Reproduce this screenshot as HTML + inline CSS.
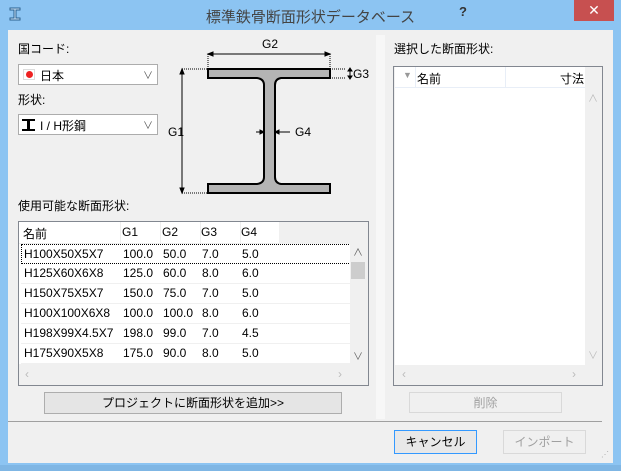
<!DOCTYPE html>
<html><head><meta charset="utf-8"><style>
*{box-sizing:border-box;margin:0;padding:0}
body{width:621px;height:471px;background:#8cc4f2;font-family:"Liberation Sans","Noto Sans CJK JP",sans-serif;font-size:12px;color:#000;position:relative;overflow:hidden}
.a{position:absolute}
.client{left:8px;top:30px;width:605px;height:433px;background:#f0f0f0}
.combo{background:#fff;border:1px solid #acacac;height:21px}
.lb{border:1px solid #828790;background:#fff}
.btn{border:1px solid #adadad;background:#e5e5e5;text-align:center;line-height:20px}
.dis{border:1px solid #d9d9d9;background:#f0f0f0;color:#a0a0a0;text-align:center;line-height:20px}
.row{position:absolute;left:0;width:330px;height:20px;border-bottom:1px solid #f0f0f0;line-height:19px}
.row span{position:absolute}
</style></head><body>
<div class="a" style="left:0;top:0;width:621px;height:30px;background:#8cc4f2"></div>
<svg class="a" style="left:9px;top:7px" width="12" height="14"><path d="M1 1H11V3H7V11H11V13H1V11H5V3H1Z" fill="#cfe6f7" stroke="#2a5f8f" stroke-width="1"/></svg>
<div class="a" style="left:0;top:6px;width:621px;text-align:center;font-size:15px;color:#444">標準鉄骨断面形状データベース</div>
<div class="a" style="left:459px;top:4px;font-size:13px;font-weight:bold;color:#333">?</div>
<div class="a" style="left:574px;top:0;width:40px;height:21px;background:#c75050;color:#fff;text-align:center;font-size:14px;line-height:20px">✕</div>
<div class="a client"></div>
<div class="a" style="left:376px;top:35px;width:9px;height:384px;background:#f7f7f7"></div>

<div class="a" style="left:18px;top:40px">国コード:</div>
<div class="a combo" style="left:18px;top:64px;width:140px"><span class="a" style="left:4px;top:4px;width:12px;height:11px;background:#fff;border:1px solid #ddd"></span><span class="a" style="left:7px;top:6px;width:7px;height:7px;border-radius:50%;background:#e22"></span><span class="a" style="left:21px;top:2px">日本</span><span class="a" style="right:4px;top:2px;color:#555;font-size:10px">∨</span></div>
<div class="a" style="left:18px;top:91px">形状:</div>
<div class="a combo" style="left:18px;top:114px;width:140px"><span class="a" style="left:8px;top:5px;width:3px;height:10px;background:#000"></span><span class="a" style="left:3px;top:4px;width:13px;height:2px;background:#000"></span><span class="a" style="left:3px;top:14px;width:13px;height:2px;background:#000"></span><span class="a" style="left:21px;top:2px">I / H形鋼</span><span class="a" style="right:4px;top:2px;color:#555;font-size:10px">∨</span></div>

<svg class="a" style="left:160px;top:30px" width="220" height="170">
<g stroke="#000" stroke-width="1" fill="none">
<path d="M48 24H170M48 24l5-2v4zM170 24l-5-2v4z" fill="#000"/>
<path d="M48 24V39M170 24V39M22 39H48M170 39H185M170 48H185M22 163H48" stroke-dasharray="1,1"/>
<path d="M22 39V163M22 39l-2 5h4zM22 163l-2-5h4z" fill="#000"/>
<path d="M190 38V49M190 38l-2 3h4zM190 49l-2-3h4z" fill="#000"/>
<path d="M96 102h8M104 102l-4-2v4zM115 102h15M115 102l4-2v4z" fill="#000"/>
</g>
<path d="M48 39H170V48H121Q115 49 115 55V147Q115 153 121 154H170V163H48V154H97Q104 153 104 147V55Q104 49 97 48H48Z" fill="#b4b4b4" stroke="#000" stroke-width="2"/>
<text x="102" y="18" font-size="12" font-family="Liberation Sans">G2</text>
<text x="193" y="48" font-size="12" font-family="Liberation Sans">G3</text>
<text x="8" y="106" font-size="12" font-family="Liberation Sans">G1</text>
<text x="135" y="106" font-size="12" font-family="Liberation Sans">G4</text>
</svg>

<div class="a" style="left:18px;top:197px">使用可能な断面形状:</div>
<div class="a lb" style="left:18px;top:221px;width:351px;height:165px;overflow:hidden">
<div class="a" style="left:0;top:0;width:260px;height:22px;background:#fff;border-bottom:1px solid #eee"></div>
<div class="a" style="left:260px;top:0;width:90px;height:22px;background:#f0f0f0"></div>
<span class="a" style="left:4px;top:3px">名前</span><span class="a" style="left:103px;top:3px">G1</span><span class="a" style="left:143px;top:3px">G2</span><span class="a" style="left:182px;top:3px">G3</span><span class="a" style="left:222px;top:3px">G4</span>
<div class="a" style="left:101px;top:0;width:1px;height:22px;background:#eee"></div>
<div class="a" style="left:141px;top:0;width:1px;height:22px;background:#eee"></div>
<div class="a" style="left:181px;top:0;width:1px;height:22px;background:#eee"></div>
<div class="a" style="left:221px;top:0;width:1px;height:22px;background:#eee"></div>
<div style="position:absolute;left:2px;top:22px;width:330px;height:120px">
<div class="row" style="top:0;border:1px dotted #000"><span style="left:2px">H100X50X5X7</span><span style="left:101px">100.0</span><span style="left:141px">50.0</span><span style="left:180px">7.0</span><span style="left:220px">5.0</span></div>
<div class="row" style="top:20px"><span style="left:3px">H125X60X6X8</span><span style="left:102px">125.0</span><span style="left:142px">60.0</span><span style="left:181px">8.0</span><span style="left:221px">6.0</span></div>
<div class="row" style="top:40px"><span style="left:3px">H150X75X5X7</span><span style="left:102px">150.0</span><span style="left:142px">75.0</span><span style="left:181px">7.0</span><span style="left:221px">5.0</span></div>
<div class="row" style="top:60px"><span style="left:3px">H100X100X6X8</span><span style="left:102px">100.0</span><span style="left:142px">100.0</span><span style="left:181px">8.0</span><span style="left:221px">6.0</span></div>
<div class="row" style="top:80px"><span style="left:3px">H198X99X4.5X7</span><span style="left:102px">198.0</span><span style="left:142px">99.0</span><span style="left:181px">7.0</span><span style="left:221px">4.5</span></div>
<div class="row" style="top:100px"><span style="left:3px">H175X90X5X8</span><span style="left:102px">175.0</span><span style="left:142px">90.0</span><span style="left:181px">8.0</span><span style="left:221px">5.0</span></div>
</div>
<div class="a" style="left:331px;top:22px;width:18px;height:120px;background:#f0f0f0"></div>
<div class="a" style="left:332px;top:40px;width:14px;height:17px;background:#cdcdcd"></div>
<span class="a" style="left:334px;top:22px;color:#606060;font-size:10px">∧</span>
<span class="a" style="left:334px;top:126px;color:#606060;font-size:10px">∨</span>
<div class="a" style="left:0;top:142px;width:349px;height:21px;background:#f0f0f0"></div>
<span class="a" style="left:6px;top:145px;color:#bbb">‹</span><span class="a" style="left:319px;top:145px;color:#bbb">›</span>
</div>
<div class="a btn" style="left:44px;top:392px;width:298px;height:22px">プロジェクトに断面形状を追加&gt;&gt;</div>

<div class="a" style="left:394px;top:40px">選択した断面形状:</div>
<div class="a lb" style="left:393px;top:66px;width:210px;height:320px;overflow:hidden;background:#f0f0f0">
<div class="a" style="left:1px;top:0;width:190px;height:298px;background:#fff"></div>
<div class="a" style="left:1px;top:20px;width:190px;height:1px;background:#e8eef7"></div>
<div class="a" style="left:21px;top:0;width:1px;height:20px;background:#e8eef7"></div>
<div class="a" style="left:111px;top:0;width:1px;height:20px;background:#e8eef7"></div>
<span class="a" style="left:9px;top:3px;color:#999;font-size:9px">▼</span>
<span class="a" style="left:23px;top:3px">名前</span><span class="a" style="left:166px;top:3px">寸法</span>
<span class="a" style="left:194px;top:23px;color:#bbb;font-size:10px">∧</span>
<span class="a" style="left:194px;top:280px;color:#bbb;font-size:10px">∨</span>
<span class="a" style="left:8px;top:300px;color:#bbb">‹</span><span class="a" style="left:178px;top:300px;color:#bbb">›</span>
</div>
<div class="a dis" style="left:409px;top:392px;width:153px;height:21px">削除</div>
<div class="a" style="left:8px;top:421px;width:594px;height:1px;background:#a0a0a0"></div>
<div class="a btn" style="left:394px;top:430px;width:83px;height:24px;border:1px solid #3399ff;line-height:22px;background:#e8e8e8">キャンセル</div>
<div class="a dis" style="left:503px;top:430px;width:83px;height:24px;line-height:22px">インポート</div>
<span class="a" style="left:601px;top:450px;color:#aaa;font-size:8px">⋰</span>
<div class="a" style="left:0;top:465px;width:621px;height:6px;background:#7fb6e4"></div>
</body></html>
